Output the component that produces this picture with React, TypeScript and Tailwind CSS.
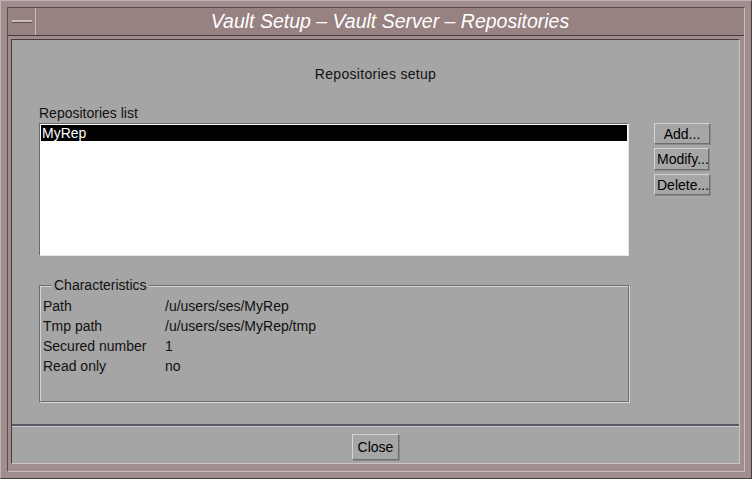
export default function App() {
  const rows = [
    ["Path", "/u/users/ses/MyRep"],
    ["Tmp path", "/u/users/ses/MyRep/tmp"],
    ["Secured number", "1"],
    ["Read only", "no"],
  ];

  const btn =
    "h-[21px] px-[2px] bg-[#a6a6a6] text-[14px] leading-none text-black border border-t-[#d4d4d4] border-l-[#d4d4d4] border-b-[#6e6e6e] border-r-[#6e6e6e] shadow-[1px_1px_0_#8a8a8a]";

  return (
    <div className="w-[752px] h-[479px] bg-[#a08d8d] border border-t-[#c4b2b2] border-l-[#c4b2b2] border-b-[#4a3c3c] border-r-[#4a3c3c] p-[6px] font-['Liberation_Sans',Arial,sans-serif]">
      <div className="h-full flex flex-col border border-t-[#5e4c4c] border-l-[#5e4c4c] border-b-[#cdbcbc] border-r-[#cdbcbc]">
        {/* title bar */}
        <div className="h-[28px] flex bg-[#978181] border-b border-b-[#4a3c3c]">
          <div className="w-[28px] border-r border-r-[#cdbcbc] flex items-center justify-center">
            <div className="w-[20px] h-[3px] bg-[#cdbcbc] border-b border-b-[#5e4c4c]" />
          </div>
          <div className="flex-1 flex items-center justify-center text-white italic text-[19.5px] leading-none">
            Vault Setup – Vault Server – Repositories
          </div>
        </div>
        {/* client */}
        <div className="flex-1 flex flex-col mt-[3px] ml-[3px] mb-[7px] mr-[4px] bg-[#a5a5a5] border border-t-[#4a3c3c] border-l-[#4a3c3c] border-b-[#d0c0c0] border-r-[#d0c0c0] text-[#111] text-[14px]">
          <div className="h-[384px] flex flex-col">
            <p className="text-center mt-[25px] leading-[18px] tracking-[0.3px]">Repositories setup</p>
            <div className="flex pl-[27px] mt-[22px]">
              <div className="w-[590px]">
                <p className="leading-[16px]">Repositories list</p>
                <div className="h-[133px] mt-[2px] bg-white border border-t-[#6a6a6a] border-l-[#6a6a6a] border-b-[#e6e6e6] border-r-[#e6e6e6] p-[1px]">
                  <div className="h-[16px] bg-black text-white leading-[16px] pl-[1px]">MyRep</div>
                </div>
                <div className="mt-[29px] h-[117px] relative border border-[#6e6e6e] shadow-[1px_1px_0_#d6d6d6,inset_1px_1px_0_#d6d6d6]">
                  <span className="absolute -top-[9px] left-[12px] px-[2px] bg-[#a5a5a5] leading-[16px]">Characteristics</span>
                  <div className="pt-[10px] pl-[3px] flex flex-col">
                    {rows.map(([k, v]) => (
                      <div key={k} className="flex h-[20px] items-center">
                        <span className="w-[122px]">{k}</span>
                        <span>{v}</span>
                      </div>
                    ))}
                  </div>
                </div>
              </div>
              <div className="ml-[25px] mt-[18px] flex flex-col items-start gap-[4px]">
                <button className={btn + " w-[56px]"}>Add...</button>
                <button className={btn + " w-[55px] h-[22px]"}>Modify...</button>
                <button className={btn + " w-[56px]"}>Delete...</button>
              </div>
            </div>
          </div>
          <div className="border-t-2 border-t-[#5a5a66] border-b border-b-[#c8c8c8]" />
          <div className="flex-1 flex items-center justify-center pt-[3px]">
            <button className={btn + " w-[47px] h-[26px]"}>Close</button>
          </div>
        </div>
      </div>
    </div>
  );
}
